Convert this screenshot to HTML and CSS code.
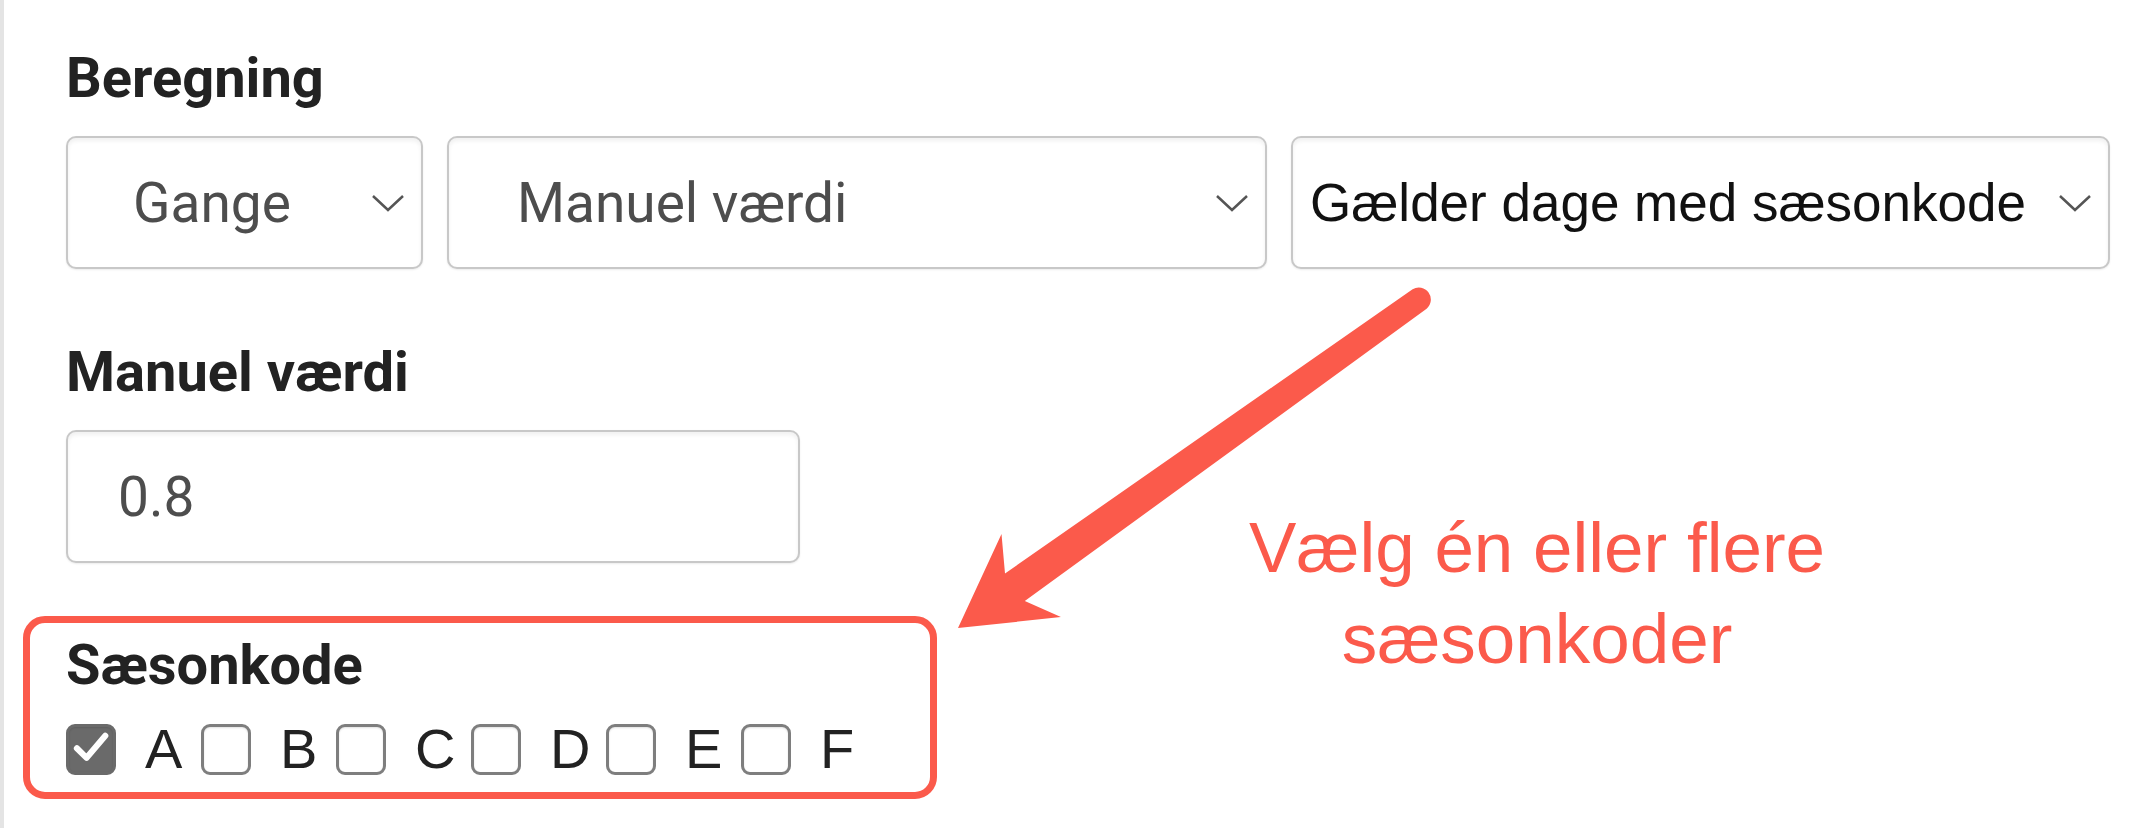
FILE: index.html
```
<!DOCTYPE html>
<html lang="da">
<head>
    <meta charset="UTF-8">
    <meta name="viewport" content="width=device-width, initial-scale=1.0">
    <title>Beregning</title>
    <link rel="stylesheet" href="styles.css">
</head>
<body>

<div class="panel">
    <!-- Beregning -->
    <div class="field">
        <div class="label">Beregning</div>
        <div class="select-row">
            <div class="select select-op">
                <span>Gange</span>
                <svg class="chevron" viewBox="0 0 34 20"><path d="M2 3 L17 17 L32 3"/></svg>
            </div>
            <div class="select select-source">
                <span>Manuel værdi</span>
                <svg class="chevron" viewBox="0 0 34 20"><path d="M2 3 L17 17 L32 3"/></svg>
            </div>
            <div class="select select-native">
                <span>Gælder dage med sæsonkode</span>
                <svg class="chevron" viewBox="0 0 34 20"><path d="M2 3 L17 17 L32 3"/></svg>
            </div>
        </div>
    </div>

    <!-- Manuel værdi -->
    <div class="field field-value">
        <label class="label" for="manualValue">Manuel værdi</label>
        <input type="text" id="manualValue" class="text-input" value="0.8">
    </div>

    <!-- Sæsonkode (markeret) -->
    <div class="field callout">
        <div class="label">Sæsonkode</div>
        <div class="codes">
            <label class="code"><span class="box checked"><svg viewBox="0 0 24 24"><path d="M4.3 11.6 L9.6 16.8 L19.8 4.8"/></svg></span>A</label>
            <label class="code"><span class="box"></span>B</label>
            <label class="code"><span class="box"></span>C</label>
            <label class="code"><span class="box"></span>D</label>
            <label class="code"><span class="box"></span>E</label>
            <label class="code"><span class="box"></span>F</label>
        </div>
    </div>
</div>

<!-- annotering -->
<svg class="arrow" viewBox="0 0 2152 828">
    <path d="M958 628 L1060.9 617.1 L1024.8 601.1 L1426.6 308.7 A12 12 0 0 0 1412.6 289.3 L1005 573.5 L1001.5 534.1 Z"/>
</svg>
<div class="note">Vælg én eller flere<br>sæsonkoder</div>

</body>
</html>
```

FILE: styles.css
```
body {
    margin: 0;
    background-color: #fff;
    font-family: Roboto, "Liberation Sans", sans-serif;
    position: relative;
}
.panel {
    min-height: 100vh;
    box-sizing: border-box;
    border-left: 4px solid #e4e4e4;
    padding: 46px 42px 0 62px;
}
.label {
    display: block;
    font-size: 56px;
    line-height: 64px;
    font-weight: bold;
    color: #222;
    margin-bottom: 26px;
}
.field-value {
    margin-top: 71px;
}
.select-row {
    display: flex;
    gap: 24px;
}
.select, .text-input {
    height: 133px;
    box-sizing: border-box;
    border: 2px solid #c8c8c8;
    border-radius: 10px;
    background-color: #fff;
    box-shadow: inset 0 3px 4px rgba(0, 0, 0, 0.06), 0 1px 2px rgba(0, 0, 0, 0.08);
}
.select {
    display: flex;
    align-items: center;
    justify-content: space-between;
    min-width: 0;
    padding-right: 16px;
    font-size: 55px;
    color: #4d4d4d;
    white-space: nowrap;
}
.select-op {
    flex: 0 0 357px;
    padding-left: 65px;
}
.select-source {
    flex: 0 0 820px;
    padding-left: 68px;
}
.select-native {
    flex: 1 1 0;
    padding-left: 17px;
    font-family: "Liberation Sans", Arial, sans-serif;
    font-size: 53px;
    color: #111;
}
.chevron {
    width: 34px;
    height: 20px;
    flex: none;
}
.chevron path {
    fill: none;
    stroke: #555;
    stroke-width: 2.5;
}
.text-input {
    display: block;
    width: 734px;
    padding: 0 0 0 50px;
    font-family: Roboto, sans-serif;
    font-size: 55px;
    color: #4d4d4d;
    outline: none;
}
.callout {
    margin: 53px 0 0 -43px;
    width: 914px;
    box-sizing: border-box;
    border: 7px solid #fb5a4b;
    border-radius: 22px;
    padding: 10px 0 15px 36px;
}
.callout .label {
    margin-bottom: 24px;
}
.codes {
    display: flex;
}
.code {
    width: 135px;
    display: flex;
    align-items: center;
    gap: 29px;
    font-family: "Liberation Sans", Arial, sans-serif;
    font-size: 56px;
    line-height: 1;
    color: #222;
}
.box {
    width: 50px;
    height: 51px;
    box-sizing: border-box;
    border: 3px solid #7e7e7e;
    border-radius: 9px;
    background-color: #fff;
    box-shadow: inset 0 1px 2px rgba(0, 0, 0, 0.12);
    flex: none;
    display: flex;
    align-items: center;
    justify-content: center;
}
.box.checked {
    background-color: #6a6a6a;
    border-color: #6a6a6a;
}
.box svg {
    width: 46px;
    height: 46px;
}
.box svg path {
    fill: none;
    stroke: #fff;
    stroke-width: 3.3;
    stroke-linecap: round;
    stroke-linejoin: round;
}
.arrow {
    position: absolute;
    left: 0;
    top: 0;
    width: 2152px;
    height: 828px;
    pointer-events: none;
}
.arrow path {
    fill: #fb5a4b;
}
.note {
    position: absolute;
    left: 1187px;
    top: 502px;
    width: 700px;
    text-align: center;
    font-family: "Liberation Sans", Arial, sans-serif;
    font-size: 71px;
    line-height: 91px;
    color: #fb5a4b;
}
```
